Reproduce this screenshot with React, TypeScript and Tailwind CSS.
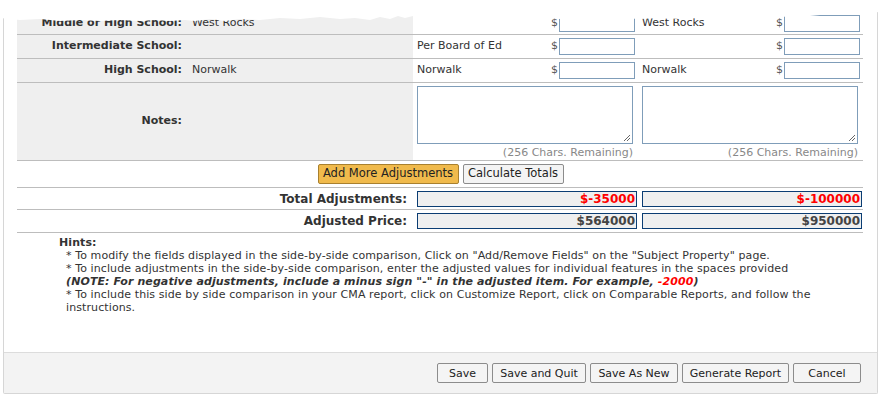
import React from 'react';

const font = { fontFamily: 'Verdana, "DejaVu Sans", sans-serif' };

function Money({ value }: { value?: string }) {
  return (
    <div className="flex items-center justify-end gap-px pr-[3px]">
      <span className="text-[#555]">$</span>
      <div className="h-[17px] w-[76px] border border-[#7f9db9] bg-white">{value}</div>
    </div>
  );
}

function CompCell({ text }: { text?: string }) {
  return (
    <div className="flex items-center justify-between pl-1">
      <span className="text-[#333]">{text}</span>
      <Money />
    </div>
  );
}

function SchoolRow({ label, value, c1, c2, h }: { label: string; value?: string; c1?: string; c2?: string; h: string }) {
  return (
    <div className={`grid grid-cols-[169px_227px_225px_225px] border-b border-[#bdbdbd] ${h}`}>
      <div className="flex items-center justify-end bg-[#efefef] pr-1 font-bold text-[#333]">{label}</div>
      <div className="flex items-center bg-[#efefef] pl-[6px] text-[#333]">{value}</div>
      <CompCell text={c1} />
      <CompCell text={c2} />
    </div>
  );
}

function NotesCell() {
  return (
    <div className="flex flex-col pl-1 pt-[3px]">
      <div className="h-[58px] w-[216px] border border-[#7f9db9] bg-white relative">
        <svg className="absolute right-[1px] bottom-[1px]" width="9" height="9" viewBox="0 0 9 9">
          <path d="M8 2 L2 8 M8 5 L5 8" stroke="#666" strokeWidth="1" />
        </svg>
      </div>
      <div className="w-[216px] text-right text-[#888] leading-[14px] mt-[2px]">(256 Chars. Remaining)</div>
    </div>
  );
}

function TotalBox({ value, red }: { value: string; red?: boolean }) {
  return (
    <div className="pl-1">
      <div
        className={`h-[16px] w-[220px] border border-[#0b3d73] bg-[#efefef] text-right font-bold leading-[14px] pr-[1px] text-[12px] ${
          red ? 'text-[#ff0000]' : 'text-[#444]'
        }`}
      >
        {value}
      </div>
    </div>
  );
}

function FooterButton({ children, w }: { children: React.ReactNode; w: string }) {
  return (
    <button className={`h-[20px] ${w} rounded-[2px] border border-[#8c8c8c] bg-[#f4f4f4] text-[11px] text-[#222] leading-none`}>
      {children}
    </button>
  );
}

export default function App() {
  return (
    <div className="relative h-[398px] w-[881px] overflow-hidden bg-white text-[11px]" style={font}>
      <div className="mx-[3px] flex h-[394px] flex-col border-x border-b border-[#d6d6d6] rounded-b-[2px]">
        <div className="flex-1 pl-[13px]">
          <div className="w-[846px]">
            <SchoolRow label="Middle or High School:" value="West Rocks" c2="West Rocks" h="h-[35px] pt-[12px]" />
            <SchoolRow label="Intermediate School:" c1="Per Board of Ed" h="h-[24px]" />
            <SchoolRow label="High School:" value="Norwalk" c1="Norwalk" c2="Norwalk" h="h-[24px]" />

            <div className="grid h-[78px] grid-cols-[169px_227px_225px_225px] border-b border-[#bdbdbd]">
              <div className="flex items-center justify-end bg-[#efefef] pr-1 font-bold text-[#333]">Notes:</div>
              <div className="bg-[#efefef]" />
              <NotesCell />
              <NotesCell />
            </div>

            <div className="flex h-[27px] items-center justify-center gap-1 border-b border-[#bdbdbd] pl-[1px]">
              <button className="h-[20px] w-[141px] rounded-[2px] border border-[#a8802f] bg-[#f0ba4c] text-[11.5px] text-[#222]">
                Add More Adjustments
              </button>
              <button className="h-[20px] w-[101px] rounded-[2px] border border-[#8c8c8c] bg-[#f4f4f4] text-[11.5px] text-[#222]">
                Calculate Totals
              </button>
            </div>

            <div className="grid h-[22px] grid-cols-[396px_225px_225px] items-center border-b border-[#bdbdbd]">
              <div className="pr-[6px] text-right font-bold text-[12px] text-[#333]">Total Adjustments:</div>
              <TotalBox value="$-35000" red />
              <TotalBox value="$-100000" red />
            </div>
            <div className="grid h-[23px] grid-cols-[396px_225px_225px] items-center border-b border-[#bdbdbd]">
              <div className="pr-[6px] text-right font-bold text-[12px] text-[#333]">Adjusted Price:</div>
              <TotalBox value="$564000" />
              <TotalBox value="$950000" />
            </div>
          </div>

          <div className="pl-[42px] pt-[3px] leading-[13px] tracking-[0.1px] text-[#333]">
            <div className="font-bold">Hints:</div>
            <div className="pl-[7px]">
              <div>* To modify the fields displayed in the side-by-side comparison, Click on "Add/Remove Fields" on the "Subject Property" page.</div>
              <div>* To include adjustments in the side-by-side comparison, enter the adjusted values for individual features in the spaces provided</div>
              <div className="font-bold italic">
                (NOTE: For negative adjustments, include a minus sign "-" in the adjusted item. For example, <span className="text-[#ff0000]">-2000</span>)
              </div>
              <div className="w-[745px]">
                * To include this side by side comparison in your CMA report, click on Customize Report, click on Comparable Reports, and follow the instructions.
              </div>
            </div>
          </div>
        </div>

        <div className="flex h-[41px] items-center justify-end gap-1 border-t border-[#dcdcdc] bg-[#f3f3f3] pr-[16px]">
          <FooterButton w="w-[51px]">Save</FooterButton>
          <FooterButton w="w-[94px]">Save and Quit</FooterButton>
          <FooterButton w="w-[88px]">Save As New</FooterButton>
          <FooterButton w="w-[107px]">Generate Report</FooterButton>
          <FooterButton w="w-[68px]">Cancel</FooterButton>
        </div>
      </div>

      {/* torn screenshot edge */}
      <svg className="absolute left-0 top-0" width="881" height="26" viewBox="0 0 881 26" preserveAspectRatio="none">
        <path
          d="M0 0 H881 V12 L862 13 L850 15 L830 14 L810 16 L790 17 L770 16 L750 18 L720 19 L700 18 L680 19 L660 18 L640 19 L620 18 L600 19 L580 18 L560 19 L540 17 L520 15 L500 14 L470 15 L450 14 L430 15 L413 16 L405 18 L398 16 L390 19 L380 17 L370 20 L355 18 L340 19 L320 17 L300 19 L280 18 L260 20 L240 19 L225 21 L210 19 L195 21 L185 20 L170 21 L155 20 L140 21 L120 20 L100 21 L80 20 L60 21 L40 19 L20 20 L0 18 Z"
          fill="#ffffff"
        />
      </svg>
    </div>
  );
}
